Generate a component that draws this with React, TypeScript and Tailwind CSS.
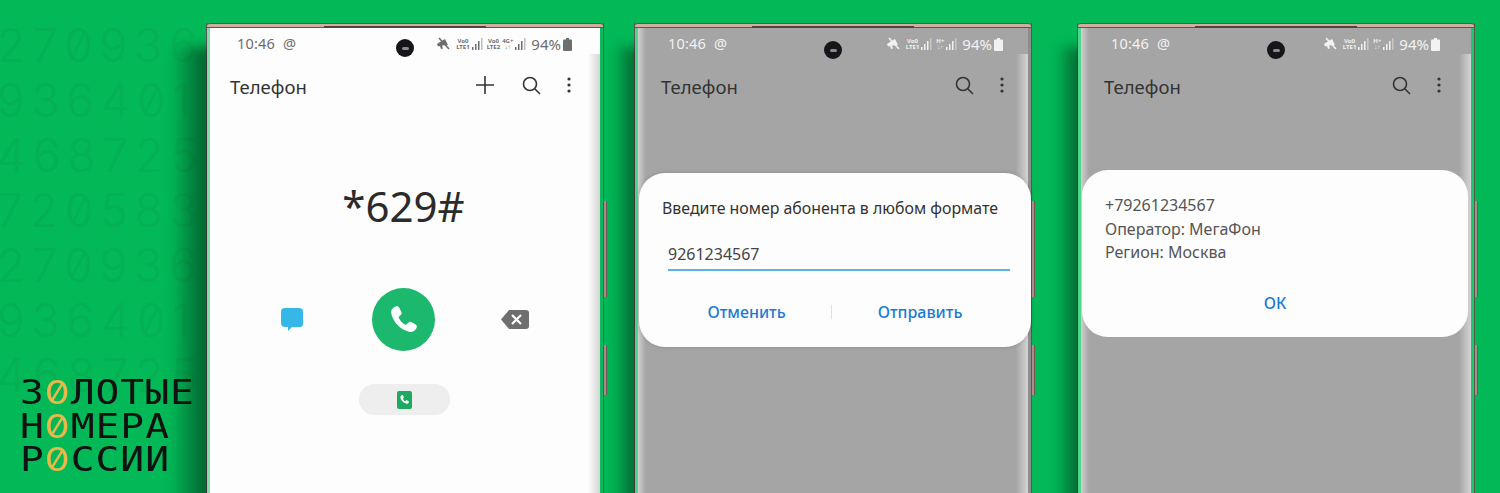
const digitRows = ['270936', '936401', '468725', '720583', '270936', '936401', '468725'];

const StatusBar = ({ light, dual }: { light?: boolean; dual?: boolean }) => {
  const c = light ? '#f2f2f2' : '#6e6e6e';
  const Bars = () => (
    <svg width="13" height="12" viewBox="0 0 13 12" fill={c}>
      <rect x="0" y="9" width="1.5" height="3" />
      <rect x="3" y="6" width="1.5" height="6" />
      <rect x="6" y="3" width="1.5" height="9" />
      <rect x="9" y="0" width="1.5" height="12" opacity="0.45" />
    </svg>
  );
  const Small = ({ a, b }: { a: string; b: string }) => (
    <span className="flex flex-col items-center text-[6px] leading-[6px] font-bold">
      <span>{a}</span>
      <span>{b}</span>
    </span>
  );
  return (
    <div className="flex items-center justify-between h-[32px]" style={{ color: c }}>
      <span className="text-[14.500px] tracking-[0.2px]">10:46&nbsp; @</span>
      <div className="flex items-center gap-[2px]">
        <svg width="15" height="14" viewBox="0 0 15 14" fill={c} className="mr-[3px]">
          <path d="M1 7l3-2 5-3 3 6-6 .5 1 3-2 .5-1-3-2 .5z" />
          <path d="M3 1l10 11" stroke={c} strokeWidth="1.600" />
        </svg>
        <Small a="Vo0" b="LTE1" />
        <Bars />
        {dual ? <Small a="Vo0" b="LTE2" /> : null}
        <Small a={dual ? '4G+' : 'H+'} b="↓↑" />
        <Bars />
        <span className="text-[15px] ml-[1px]">94%</span>
        <svg width="9" height="13" viewBox="0 0 9 13" fill={c}>
          <rect x="3" y="0" width="3" height="2" />
          <rect x="0" y="1.500" width="9" height="11.500" rx="1" />
        </svg>
      </div>
    </div>
  );
};

const AppBar = ({ plus }: { plus?: boolean }) => (
  <div className="flex items-center h-[44px] mt-[5px] text-[#333]">
    <span className="text-[18.500px] flex-1">Телефон</span>
    {plus ? (
      <svg width="20" height="20" viewBox="0 0 20 20" stroke="#333" strokeWidth="1.600" className="mr-[26px] mb-[4px]">
        <path d="M10 1v18M1 10h18" />
      </svg>
    ) : null}
    <svg width="20" height="20" viewBox="0 0 20 20" fill="none" stroke="#333" strokeWidth="1.600" className="mr-[26px] mb-[4px]">
      <circle cx="9" cy="9" r="6.500" />
      <path d="M14 14l5 5" />
    </svg>
    <svg width="4" height="16" viewBox="0 0 4 16" fill="#333" className="mr-[1px] mb-[4px]">
      <circle cx="2" cy="2" r="1.600" />
      <circle cx="2" cy="8" r="1.600" />
      <circle cx="2" cy="14" r="1.600" />
    </svg>
  </div>
);

const PhoneGlyph = ({ size }: { size: number }) => (
  <svg width={size} height={size} viewBox="0 0 24 24" fill="#fff">
    <path d="M6.200 2.600c1-.6 2-.3 2.600.7l1.600 3c.5.9.3 1.700-.4 2.400l-1.100 1c-.4.4-.4.8-.2 1.300.9 1.800 2.400 3.400 4.300 4.600.5.300.9.300 1.300-.1l1.200-1.200c.7-.7 1.500-.8 2.400-.3l2.900 1.700c1 .6 1.200 1.600.6 2.600-1 1.700-2.700 3-4.600 2.800-3.400-.4-6.700-2.400-9.300-5.200C5 13.100 3.100 9.600 3 6.300c0-1.500 1.500-2.800 3.200-3.700z" />
  </svg>
);

const Phone = ({
  screen,
  edge,
  shadow,
  lowCamera,
  children,
}: {
  screen: string;
  edge: string;
  shadow: string;
  lowCamera?: boolean;
  children: React.ReactNode;
}) => (
  <div className="relative w-[398px] h-[490px] shrink-0 border-x border-[#5b5552]">
    {/* cast shadow on the backdrop */}
    <div className={`absolute top-[24px] bottom-[-20px] blur-[6px] bg-gradient-to-l from-black/55 to-transparent ${shadow}`} />
    {/* bezel */}
    <div className="relative h-[5px] rounded-t-[3px] bg-[#d3ada0] border-y border-[#6d5148]">
      <div className="absolute left-[117px] top-[2px] w-[162px] h-[2px] bg-[#54423c]" />
    </div>
    <div className={`relative h-[485px] border-l-[3px] border-r-[3px] ${edge}`}>
      <div className={`relative h-full ${screen}`}>
        <div className="absolute top-[26px] right-0 bottom-0 w-[12px] bg-gradient-to-r from-transparent to-[#d4d4d4]" />
        <div
          className={`absolute left-1/2 -translate-x-1/2 w-[18px] h-[18px] rounded-full bg-[#15151a] flex items-center justify-center ${
            lowCamera ? 'top-[13px]' : 'top-[11px]'
          }`}
        >
          <div className="w-[7px] h-[3px] bg-[#8a8a90] rounded-sm" />
        </div>
        {children}
      </div>
    </div>
    {/* side keys */}
    <div className="absolute -right-[4px] top-[178px] w-[3px] h-[96px] bg-[#a89089] border-r border-[#6b5a55]" />
    <div className="absolute -right-[4px] top-[322px] w-[3px] h-[50px] bg-[#a89089] border-r border-[#6b5a55]" />
  </div>
);

export default function App() {
  return (
    <div
      className="relative w-[1500px] h-[493px] overflow-hidden bg-[#02b857]"
      style={{ fontFamily: '"Noto Sans", Roboto, sans-serif' }}
    >
      {/* background digits */}
      <div
        className="absolute left-[-3px] top-[18px] text-[#05b054] text-[46px] font-light leading-[55px] tracking-[7px] slashed-zero whitespace-nowrap"
        style={{ fontFamily: 'Inter, sans-serif' }}
      >
        {digitRows.map((r, i) => (
          <div key={i}>{r}</div>
        ))}
      </div>

      {/* phones */}
      <div className="relative flex items-start pt-[23px] pl-[206px]">
        <Phone screen="bg-[#fdfdfd]" edge="border-l-[#7fe0ad] border-r-[#0fb85f]" shadow="right-[calc(100%-6px)] w-[42px]">
          <div className="relative pl-[20px] pr-[28px]">
            <div className="pl-[7px]">
              <StatusBar dual />
            </div>
            <AppBar plus />
            <div className="text-center text-[42px] leading-[54px] text-[#2b2b2b] mt-[70px] pl-[5px]">*629#</div>
            <div className="flex items-center mt-[55px] pl-[51px]">
              <svg width="22" height="23" viewBox="0 0 22 23" fill="#35b8e8">
                <path d="M4 0h14a4 4 0 0 1 4 4v12a3 3 0 0 1-3 3h-8l-4 4v-4H4a4 4 0 0 1-4-4V4a4 4 0 0 1 4-4z" />
              </svg>
              <div className="ml-[69px] w-[63px] h-[63px] rounded-full bg-[#1cb86e] flex items-center justify-center">
                <PhoneGlyph size={33} />
              </div>
              <svg width="28" height="19" viewBox="0 0 28 19" className="ml-[66px]">
                <path d="M8 0h17a3 3 0 0 1 3 3v13a3 3 0 0 1-3 3H8L0 9.500z" fill="#6e6e6e" />
                <path d="M11 5l9 9M20 5l-9 9" stroke="#fff" strokeWidth="2.200" />
              </svg>
            </div>
            <div className="flex justify-center mt-[33px] pl-[6px]">
              <div className="w-[91px] h-[31px] rounded-full bg-[#eeeeee] flex items-center justify-center">
                <div className="w-[15px] h-[18px] bg-[#1fa85f] rounded-[2px] flex items-center justify-center">
                  <PhoneGlyph size={11} />
                </div>
              </div>
            </div>
          </div>
        </Phone>

        <div className="ml-[30px]">
          <Phone screen="bg-[#a5a5a5]" edge="border-l-[#4fd68c] border-r-[#8e8e8e]" shadow="right-[calc(100%-6px)] w-[28px]" lowCamera>
            <div className="absolute top-0 left-0 bottom-0 w-[8px] bg-gradient-to-l from-transparent to-[#cfcfcf]" />
            <div className="relative pl-[23px] pr-[23px]">
              <div className="pl-[7px] pr-[2px]">
                <StatusBar light />
              </div>
              <AppBar />
            </div>
            <div className="relative ml-[1px] mr-[-3px] mt-[64px] h-[174px] rounded-[26px] bg-[#fdfdfd] pt-[23px] pl-[23px] pr-[23px] shadow-[0_0_4px_rgba(0,0,0,0.15)]">
              <div className="text-[15.900px] leading-[24px] text-[#333] whitespace-nowrap">Введите номер абонента в любом формате</div>
              <div className="ml-[6px] mr-[-2px] mt-[22px] h-[29px] border-b-2 border-[#5cb2ea] text-[16px] leading-[24px] text-[#444]">
                9261234567
              </div>
              <div className="flex items-center mt-[29px] text-[16px] font-medium text-[#1a7ad4]">
                <span className="w-[173px] text-center">Отменить</span>
                <span className="w-px h-[14px] bg-[#e2e2e2]" />
                <span className="w-[180px] text-center">Отправить</span>
              </div>
            </div>
          </Phone>
        </div>

        <div className="ml-[45px]">
          <Phone screen="bg-[#a5a5a5]" edge="border-l-[#4fd68c] border-r-[#1fc76c]" shadow="right-[calc(100%-6px)] w-[28px]" lowCamera>
            <div className="absolute top-0 left-0 bottom-0 w-[8px] bg-gradient-to-l from-transparent to-[#cfcfcf]" />
            <div className="relative pl-[23px] pr-[29px]">
              <div className="pl-[7px] pr-[2px]">
                <StatusBar light />
              </div>
              <AppBar />
            </div>
            <div className="relative ml-[1px] mr-[3px] mt-[61px] h-[167px] rounded-[26px] bg-[#fdfdfd] pt-[24px] px-[23px]">
              <div className="text-[16px] leading-[23.500px] text-[#555]">
                <div>+79261234567</div>
                <div>Оператор: МегаФон</div>
                <div>Регион: Москва</div>
              </div>
              <div className="text-center text-[16px] font-medium text-[#1a7ad4] mt-[26px]">ОК</div>
            </div>
          </Phone>
        </div>
      </div>

      {/* logo */}
      <div
        className="absolute left-[20px] top-[376px] origin-left scale-x-[1.2] text-[#111] text-[33px] font-normal leading-[33.500px] tracking-[0.800px] whitespace-nowrap"
        style={{ fontFamily: '"DejaVu Sans Mono", monospace' }}
      >
        <div>
          З<span className="text-[#e8b84a] slashed-zero" style={{ fontFamily: 'Inter, sans-serif' }}>0</span>ЛОТЫЕ
        </div>
        <div>
          Н<span className="text-[#e8b84a] slashed-zero" style={{ fontFamily: 'Inter, sans-serif' }}>0</span>МЕРА
        </div>
        <div>
          Р<span className="text-[#e8b84a] slashed-zero" style={{ fontFamily: 'Inter, sans-serif' }}>0</span>ССИИ
        </div>
      </div>
    </div>
  );
}
